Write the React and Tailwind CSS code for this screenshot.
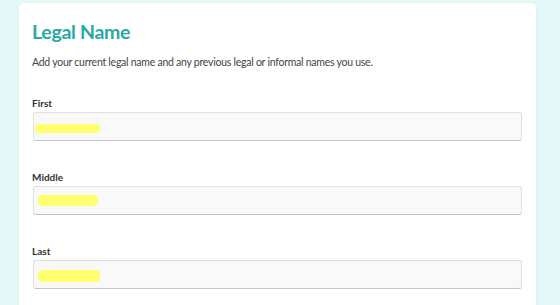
export default function App() {
    const fields = [
        { label: 'First', pad: 'pl-px', w: 'w-[65px]', h: 'h-[9px]', offset: 'mt-[3px]' },
        { label: 'Middle', pad: 'pl-[4px]', w: 'w-[60px]', h: 'h-[11px]', offset: 'mt-[0px]' },
        { label: 'Last', pad: 'pl-[4px]', w: 'w-[62px]', h: 'h-[12px]', offset: 'mt-[2px]' },
    ];

    return (
        <div className="min-h-screen bg-[#e5f8f8] pt-[3px] pl-[19px] pr-[24px] font-['Lato',sans-serif]">
            <div className="bg-white rounded-[5px] shadow-[0_0_2px_rgba(0,0,0,0.08)] pt-[16px] pl-[13px] pr-[14px] pb-6 min-h-[310px]">
                <h1 className="text-[19.5px] leading-[26px] font-bold tracking-[-0.3px] text-[#2ba7a6]">Legal Name</h1>
                <p className="mt-[9px] text-[10.5px] leading-[16px] tracking-[-0.25px] text-[#444]">
                    Add your current legal name and any previous legal or informal names you use.
                </p>

                <div className="mt-[26px] flex flex-col gap-[29px]">
                    {fields.map(f => (
                        <div key={f.label} className="flex flex-col">
                            <label className="text-[10px] leading-[14px] font-bold text-[#333] mb-[2px]">{f.label}</label>
                            <div className={`ml-px h-[29px] rounded-[3px] bg-[#f9f9f9] border border-[#e0e0e0] border-b-[#c4c4c4] flex items-center ${f.pad}`}>
                                <span className={`${f.w} ${f.h} ${f.offset} rounded-[4px] bg-[#ffff70]`} />
                            </div>
                        </div>
                    ))}
                </div>
            </div>
        </div>
    );
}
